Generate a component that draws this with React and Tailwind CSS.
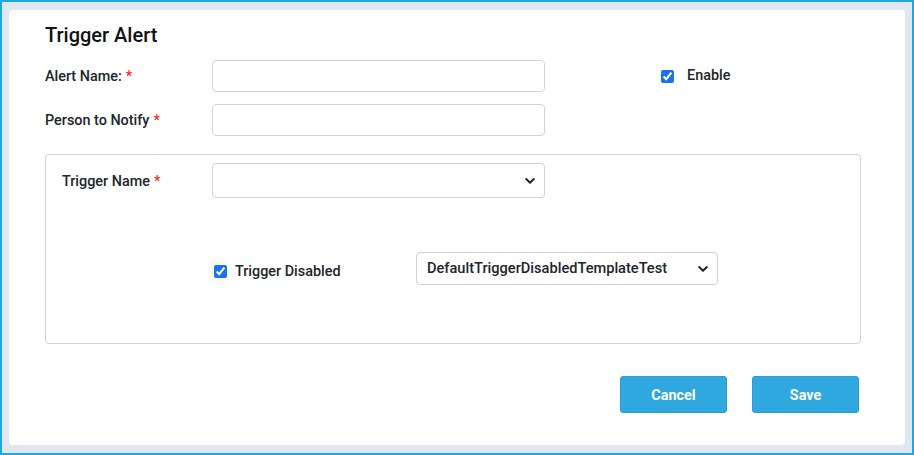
import React from "react";

const Chevron = () => (
  <svg
    width="10"
    height="7"
    viewBox="0 0 10 7"
    className="pointer-events-none absolute right-[10px] top-1/2 -translate-y-1/2"
  >
    <path d="M1.2 1.5 L5 5.2 L8.8 1.5" fill="none" stroke="#222" strokeWidth="1.9" strokeLinecap="round" strokeLinejoin="round" />
  </svg>
);

const Req = () => <span className="text-[#ff1f1f] ml-[4px]">*</span>;

export default function App() {
  return (
    <div
      className="w-[914px] h-[455px] border-2 border-[#1ea8e2] bg-[#dfe7f1] pt-[8px] pl-[7px] pr-[7px] pb-[8px] text-[#212529]"
      style={{ fontFamily: "Roboto, 'Liberation Sans', sans-serif" }}
    >
      <div className="h-full bg-white rounded-[4px] pl-[36px] pr-[44px] pt-[13px]">
        <h2 className="text-[20px] font-medium leading-[24px] text-[#111]">Trigger Alert</h2>

        {/* top fields */}
        <div className="flex mt-[13px]">
          <div className="flex flex-col gap-[12px]">
            <div className="flex items-center h-[32px]">
              <label className="w-[167px] mt-[2px] text-[14.4px] font-medium">
                Alert Name:<Req />
              </label>
              <input className="w-[333px] h-[32px] border border-[#cfd3d7] rounded-[4px]" />
            </div>
            <div className="flex items-center h-[32px]">
              <label className="w-[167px] mt-[2px] text-[14.4px] font-medium">
                Person to Notify<Req />
              </label>
              <input className="w-[333px] h-[32px] border border-[#cfd3d7] rounded-[4px]" />
            </div>
          </div>
          <label className="flex items-center h-[32px] ml-[116px] text-[14.4px] font-medium">
            <input type="checkbox" defaultChecked className="w-[13px] h-[13px] m-0 accent-[#1a73e8]" />
            <span className="ml-[13px]">Enable</span>
          </label>
        </div>

        {/* trigger box */}
        <div className="mt-[18px] h-[190px] border border-[#cfd3d7] rounded-[4px] pl-[16px] pt-[8px]">
          <div className="flex items-center h-[35px]">
            <label className="w-[150px] mt-[3px] text-[14.4px] font-medium">
              Trigger Name<Req />
            </label>
            <div className="relative w-[333px] h-[35px]">
              <select className="appearance-none w-full h-full border border-[#cfd3d7] rounded-[4px] bg-white px-[10px] text-[14px]">
                <option></option>
              </select>
              <Chevron />
            </div>
          </div>
          <div className="flex items-center h-[33px] mt-[54px] pl-[151px]">
            <label className="flex items-center w-[203px] mt-[6px] text-[14.4px] font-medium">
              <span className="w-[14px] h-[14px] flex items-center justify-center rounded-[3px] shadow-[0_0_6px_2px_rgba(0,0,0,0.06)]">
                <input type="checkbox" defaultChecked className="w-[13px] h-[13px] m-0 accent-[#1a73e8]" />
              </span>
              <span className="ml-[8px]">Trigger Disabled</span>
            </label>
            <div className="relative w-[302px] h-[33px]">
              <select className="appearance-none w-full h-full border border-[#cfd3d7] rounded-[4px] bg-white pl-[10px] pr-[26px] text-[14.6px] font-medium">
                <option>DefaultTriggerDisabledTemplateTest</option>
              </select>
              <Chevron />
            </div>
          </div>
        </div>

        {/* buttons */}
        <div className="flex justify-end gap-[25px] mt-[32px] pr-[2px]">
          <button className="w-[107px] h-[37px] pt-[2px] bg-[#2ea8df] border border-[#2a9cd0] rounded-[3px] text-white text-[14.4px] font-bold">
            Cancel
          </button>
          <button className="w-[107px] h-[37px] pt-[2px] bg-[#2ea8df] border border-[#2a9cd0] rounded-[3px] text-white text-[14.4px] font-bold">
            Save
          </button>
        </div>
      </div>
    </div>
  );
}
